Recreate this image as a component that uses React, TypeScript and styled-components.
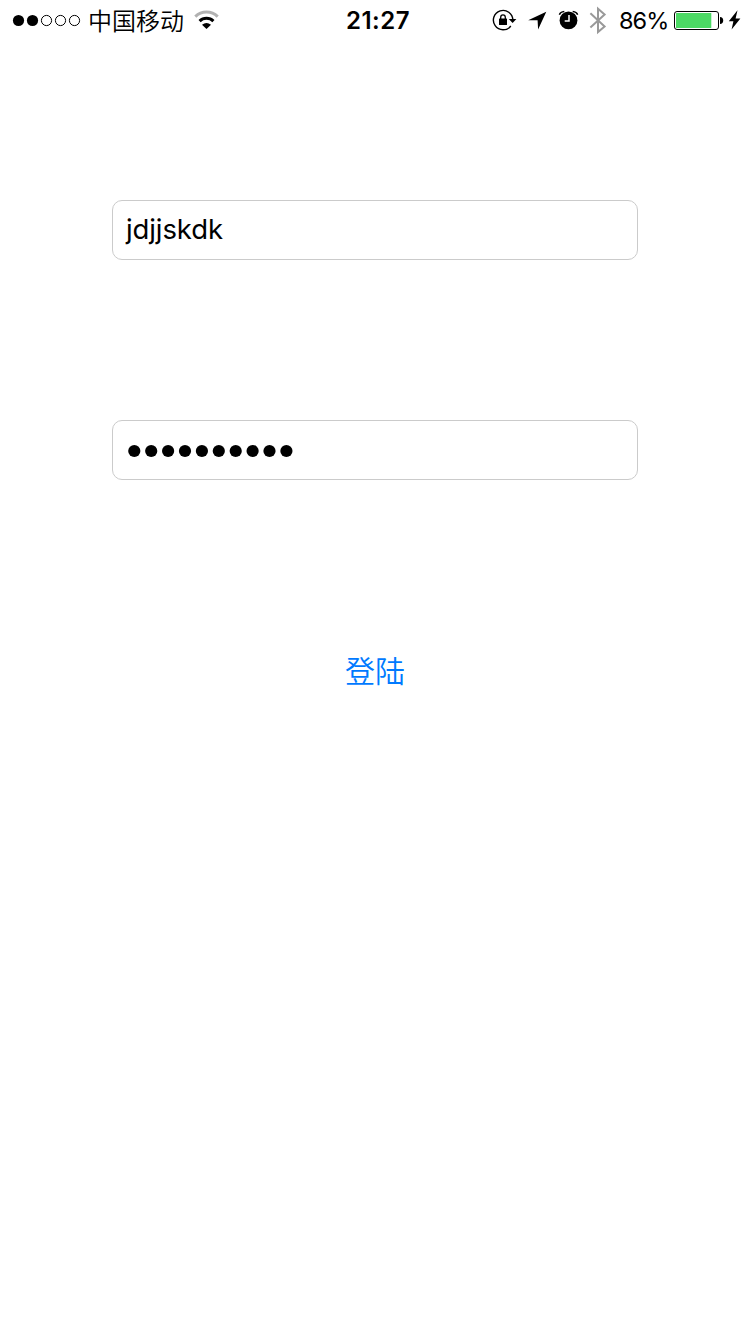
import React from "react";
import styled, { createGlobalStyle } from "styled-components";

const GlobalStyle = createGlobalStyle`
  * { box-sizing: border-box; }
  body {
    margin: 0;
    background: #fff;
    color: #000;
    font-family: Inter, "Noto Sans CJK SC", sans-serif;
  }
`;

const Screen = styled.div`
  width: 750px;
  height: 1334px;
  display: flex;
  flex-direction: column;
  background: #fff;
  overflow: hidden;
`;

const StatusBar = styled.header`
  height: 40px;
  display: flex;
  align-items: center;
  padding: 0 8px 0 12px;
`;

const StatusGroup = styled.div<{ $width: number }>`
  width: ${(p) => p.$width}px;
  height: 40px;
  display: flex;
  flex: none;
  align-items: center;
`;

const StatusIcon = styled.svg<{ $gap?: number }>`
  flex: none;
  display: block;
  margin-left: ${(p) => p.$gap ?? 0}px;
`;

const Carrier = styled.span`
  width: 98px;
  margin-left: 6px;
  font: 350 24px/40px "Noto Sans CJK SC", sans-serif;
  white-space: nowrap;
`;

const Clock = styled.time`
  margin-right: auto;
  font-size: 24px;
  font-weight: 600;
  line-height: 40px;
  padding-top: 2px;
  letter-spacing: 0.5px;
  white-space: nowrap;
`;

const Percent = styled.span`
  width: 56px;
  margin-left: 10px;
  padding-top: 2px;
  font-size: 23.5px;
  line-height: 40px;
  letter-spacing: -0.95px;
  white-space: nowrap;
`;

const Form = styled.main`
  display: flex;
  flex-direction: column;
  align-items: center;
  padding-top: 160px;
`;

const Field = styled.div`
  width: 526px;
  height: 60px;
  margin-bottom: 160px;
  padding: 0 13px;
  display: flex;
  align-items: center;
  border: 1px solid #cbcbcb;
  border-radius: 10px;
`;

const FieldText = styled.span`
  padding-bottom: 2px;
  font-size: 27.5px;
  line-height: 56px;
  letter-spacing: -0.1px;
  white-space: nowrap;
`;

const SecureDots = styled.svg`
  display: block;
  flex: none;
`;

const LoginButton = styled.button`
  height: 60px;
  padding: 0 0 2px;
  border: 0;
  background: none;
  color: #007aff;
  font: 350 30px/58px "Noto Sans CJK SC", sans-serif;
`;

const signal = [true, true, false, false, false];

export default function App() {
  return (
    <Screen>
      <GlobalStyle />
      <StatusBar>
        <StatusGroup $width={334}>
          <StatusIcon width="70" height="40" viewBox="12 0 70 40">
            {signal.map((on, i) => (
              <circle
                key={i}
                cx={18.5 + i * 14}
                cy="20.5"
                r={on ? 5.6 : 5.1}
                fill={on ? "#000" : "none"}
                stroke={on ? "none" : "#000"}
              />
            ))}
          </StatusIcon>
          <Carrier>中国移动</Carrier>
          <StatusIcon $gap={7} width="28" height="40" viewBox="193 0 28 40" fill="none" strokeWidth="3">
            <path d="M195.3 16.6A16.2 16.2 0 0 1 217.7 16.6" stroke="#b2b2b2" />
            <path d="M199.6 21.1A9.8 9.8 0 0 1 213.4 21.1" stroke="#000" />
            <path d="M206.5 29L202 24.8Q206.5 21.4 211 24.8Z" fill="#000" />
          </StatusIcon>
        </StatusGroup>
        <Clock>21:27</Clock>
        <StatusGroup $width={251}>
          <StatusIcon width="28" height="40" viewBox="491 0 28 40">
            <path d="M512.8 20A9.7 9.7 0 1 0 510.8 26" fill="none" stroke="#000" strokeWidth="1.4" />
            <path d="M508.8 19H516.4L512.6 23Z" />
            <rect x="499" y="18.6" width="8" height="6.4" rx=".5" />
            <path d="M500.7 19V17.2A2.3 2.3 0 0 1 505.3 17.2V19" fill="none" stroke="#000" strokeWidth="1.3" />
          </StatusIcon>
          <StatusIcon $gap={8} width="21" height="40" viewBox="527 0 21 40">
            <path d="M546.3 11.7L528.2 20.2H537.6L538.1 29.6Z" />
          </StatusIcon>
          <StatusIcon $gap={9} width="24" height="40" viewBox="557 0 24 40">
            <circle cx="568.5" cy="20.4" r="8.9" />
            <path d="M559.4 14.8Q560.3 11.9 564.3 11.5M572.7 11.5Q576.7 11.9 577.6 14.8" fill="none" stroke="#000" strokeWidth="1.5" />
            <path d="M569 15V21H564.7" fill="none" stroke="#fff" strokeWidth="1.5" />
          </StatusIcon>
          <StatusIcon $gap={7} width="21" height="40" viewBox="588 0 21 40">
            <path d="M590.4 13.3L604.6 26.4L598 32V8.8L604.6 14.5L590.4 27.4" fill="none" stroke="#999" strokeWidth="2" />
          </StatusIcon>
          <Percent>86%</Percent>
          <StatusIcon $gap={-2} width="51" height="40" viewBox="673 0 51 40">
            <rect x="674.5" y="11.5" width="44" height="18" rx="2.5" fill="none" stroke="#000" />
            <rect x="676" y="13" width="35.3" height="15" rx=".5" fill="#4cd964" />
            <path d="M720 17Q723.2 17.3 723.2 20.5T720 24Z" />
          </StatusIcon>
          <StatusIcon $gap={4} width="14" height="40" viewBox="728 0 14 40">
            <path d="M737.5 10.2L728.8 21.2H733.4L731.6 29.6L740.4 18.6H735.6Z" />
          </StatusIcon>
        </StatusGroup>
      </StatusBar>
      <Form>
        <Field>
          <FieldText>jdjjskdk</FieldText>
        </Field>
        <Field>
          <SecureDots width="170" height="20" viewBox="0 0 170 20" aria-label="password">
            {Array.from({ length: 10 }, (_, i) => (
              <circle key={i} cx={8.3 + i * 16.9} cy="11" r="6.1" />
            ))}
          </SecureDots>
        </Field>
        <LoginButton type="button">登陆</LoginButton>
      </Form>
    </Screen>
  );
}
